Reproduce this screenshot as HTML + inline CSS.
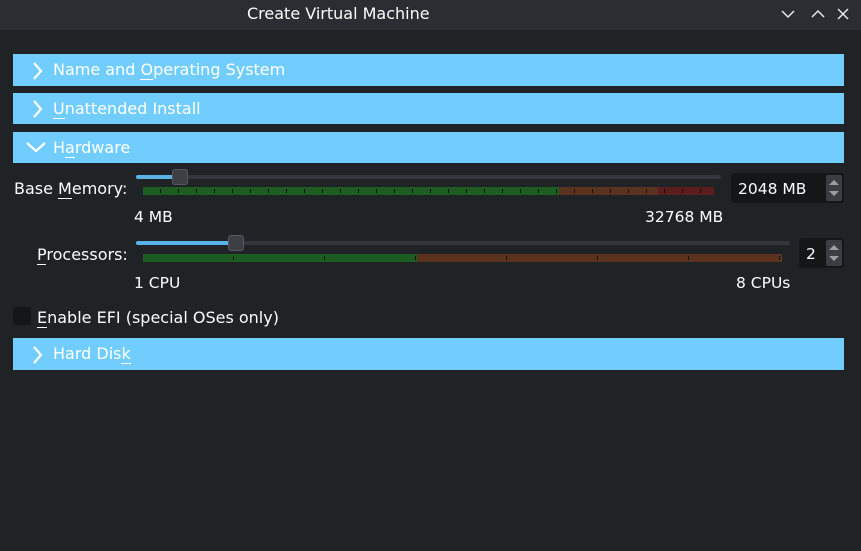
<!DOCTYPE html>
<html><head><style>
*{margin:0;padding:0;box-sizing:border-box}
body{width:861px;height:551px;background:#202326;font-family:"DejaVu Sans","Liberation Sans",sans-serif;font-size:15.5px;color:#fcfcfc;position:relative;overflow:hidden}
.a{position:absolute}
.title{left:0;top:0;width:861px;height:30px;background:#2a2e32}
.bar{left:13px;width:831px;background:#71cdfd;color:#fff;font-size:16px}
.bar span{position:absolute;left:40px;top:6px}
.bar svg{position:absolute;left:19px}
u{text-decoration:none;border-bottom:1px solid #fff;line-height:1}
.lbl{font-size:16px}
.spin{background:#141618;border-radius:3px}
.arr{background:#3a3e42;border-radius:2px}
</style></head><body>
<div class="a title"></div>
<div class="a" style="left:247px;top:4px;font-size:16px">Create Virtual Machine</div>
<svg class="a" style="left:780px;top:6px" width="70" height="16" fill="none" stroke="#e8e8e8" stroke-width="1.5">
<path d="M2 5l6 6 6-6"/><path d="M32 11l6-6 6 6"/><path d="M58 3l10 10M68 3l-10 10"/></svg>

<div class="a bar" style="top:54px;height:32px"><svg style="top:8px" width="12" height="18" fill="none" stroke="#fff" stroke-width="2.2"><path d="M2 1l7 8-7 8"/></svg><span>Name and <u>O</u>perating System</span></div>
<div class="a bar" style="top:93px;height:31px"><svg style="top:7px" width="12" height="18" fill="none" stroke="#fff" stroke-width="2.2"><path d="M2 1l7 8-7 8"/></svg><span style="top:6px"><u>U</u>nattended Install</span></div>
<div class="a bar" style="top:132px;height:31px"><svg style="left:13px;top:10px" width="20" height="11" fill="none" stroke="#fff" stroke-width="2.2"><path d="M1 1l9 8 9-8"/></svg><span>H<u>a</u>rdware</span></div>

<div class="a lbl" style="left:14px;top:179px">Base <u>M</u>emory:</div>
<div class="a" style="left:136px;top:175px;width:585px;height:4px;background:#33373b;border-radius:2px"></div>
<div class="a" style="left:136px;top:175px;width:40px;height:4px;background:#5ab3e8;border-radius:2px"></div>
<div class="a" style="left:172px;top:169px;width:16px;height:16px;background:#3c4044;border:1px solid #55595d;border-radius:3px"></div>
<div class="a" style="left:143px;top:187px;width:416px;height:8px;background:#1d5d22"></div>
<div class="a" style="left:559px;top:187px;width:99px;height:8px;background:#5a321d"></div>
<div class="a" style="left:658px;top:187px;width:56px;height:8px;background:#5b1e1d"></div>
<div class="a" style="left:143px;top:189px;width:571px;height:4px;background:repeating-linear-gradient(90deg,transparent 0,transparent 17px,#111 17px,#111 18px)"></div>
<div class="a" style="left:134px;top:208px">4 MB</div>
<div class="a" style="left:645px;top:208px">32768 MB</div>
<div class="a spin" style="left:731px;top:173px;width:113px;height:30px"></div>
<div class="a" style="left:738px;top:180px">2048 MB</div>
<div class="a arr" style="left:826px;top:175px;width:16px;height:26px"></div>
<svg class="a" style="left:828px;top:178px" width="12" height="20" fill="#9a9ea2"><path d="M1 7l5-5 5 5z"/><path d="M1 13l5 5 5-5z"/></svg>

<div class="a lbl" style="left:37px;top:245px"><u>P</u>rocessors:</div>
<div class="a" style="left:136px;top:241px;width:654px;height:4px;background:#33373b;border-radius:2px"></div>
<div class="a" style="left:136px;top:241px;width:96px;height:4px;background:#5ab3e8;border-radius:2px"></div>
<div class="a" style="left:228px;top:235px;width:16px;height:16px;background:#3c4044;border:1px solid #55595d;border-radius:3px"></div>
<div class="a" style="left:143px;top:254px;width:274px;height:8px;background:#1d5d22"></div>
<div class="a" style="left:417px;top:254px;width:365px;height:8px;background:#5a321d"></div>
<div class="a" style="left:143px;top:256px;width:639px;height:4px;background:repeating-linear-gradient(90deg,transparent 0,transparent 90px,#111 90px,#111 91px)"></div>
<div class="a" style="left:134px;top:274px">1 CPU</div>
<div class="a" style="left:736px;top:274px">8 CPUs</div>
<div class="a spin" style="left:799px;top:238px;width:45px;height:30px"></div>
<div class="a" style="left:806px;top:245px">2</div>
<div class="a arr" style="left:826px;top:240px;width:16px;height:26px"></div>
<svg class="a" style="left:828px;top:243px" width="12" height="20" fill="#9a9ea2"><path d="M1 7l5-5 5 5z"/><path d="M1 13l5 5 5-5z"/></svg>

<div class="a" style="left:13px;top:307px;width:18px;height:18px;background:#141618;border-radius:2px"></div>
<div class="a lbl" style="left:37px;top:308px"><u>E</u>nable EFI (special OSes only)</div>

<div class="a bar" style="top:338px;height:32px"><svg style="top:8px" width="12" height="18" fill="none" stroke="#fff" stroke-width="2.2"><path d="M2 1l7 8-7 8"/></svg><span>Hard Dis<u>k</u></span></div>
</body></html>
